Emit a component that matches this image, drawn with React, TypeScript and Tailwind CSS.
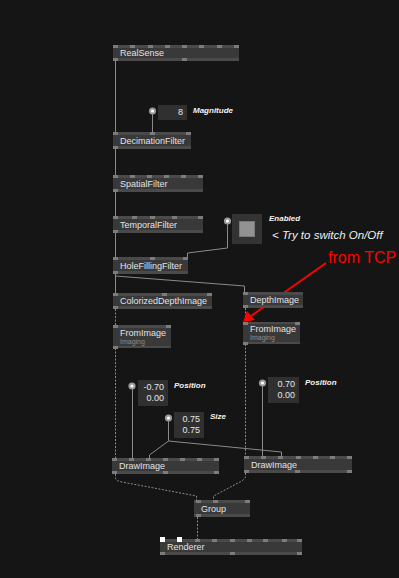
import React from 'react';

type NodeProps = {
  x: number;
  y: number;
  w: number;
  h?: number;
  label: string;
  sub?: string;
  top: number[];
  bottom: number[];
  white?: number[];
};

const font = { fontFamily: '"Liberation Sans", Arial, sans-serif' };

function Node({ x, y, w, h = 16, label, sub, top, bottom, white = [] }: NodeProps) {
  return (
    <div className="absolute flex flex-col bg-[#393939]" style={{ left: x, top: y, width: w, height: h }}>
      {/* top pin strip */}
      <div className="relative h-[3px] bg-[#4a4a4a]">
        {top.map((p) => (
          <div key={p} className="absolute top-0 h-[3px] w-[5px] bg-[#7c7c7c]" style={{ left: p }} />
        ))}
        {white.map((p) => (
          <div key={'w' + p} className="absolute top-[-2px] h-[5px] w-[5px] bg-white" style={{ left: p }} />
        ))}
      </div>
      <div className="flex flex-1 flex-col justify-center pl-[7px]">
        <span className="text-[9px] leading-[10px] text-[#e2e2e2]">{label}</span>
        {sub && <span className="text-[7px] leading-[8px] text-[#8c8c8c]">{sub}</span>}
      </div>
      {/* bottom pin strip */}
      <div className="relative h-[3px] bg-[#4a4a4a]">
        {bottom.map((p) => (
          <div key={p} className="absolute top-0 h-[3px] w-[5px] bg-[#7c7c7c]" style={{ left: p }} />
        ))}
      </div>
    </div>
  );
}

function IOBox({ x, y, w, values }: { x: number; y: number; w: number; values: string[] }) {
  return (
    <div
      className="absolute flex flex-col justify-center bg-[#303030] pr-[4px] py-[2px]"
      style={{ left: x, top: y, width: w }}
    >
      {values.map((v, i) => (
        <span key={i} className="text-right text-[9px] leading-[11px] text-[#e6e6e6]">
          {v}
        </span>
      ))}
    </div>
  );
}

function Caption({ x, y, text }: { x: number; y: number; text: string }) {
  return (
    <span
      className="absolute text-[8px] font-bold italic leading-none text-[#f2f2f2]"
      style={{ left: x, top: y - 4 }}
    >
      {text}
    </span>
  );
}

const evenly = (n: number, w: number) => Array.from({ length: n }, (_, i) => Math.round((i * (w - 5)) / (n - 1)));

export default function App() {
  return (
    <div className="relative h-[578px] w-[399px] overflow-hidden bg-[#151515]" style={font}>
      {/* links */}
      <svg className="absolute inset-0" width={399} height={578}>
        <g stroke="#8a8a8a" strokeWidth={1} fill="none">
          <path d="M115.5 61 V257" />
          <path d="M152.5 114 V132" />
          <path d="M227.5 224 V248 L187.5 253 V257" />
          <path d="M115.5 274 V293" />
          <path d="M115.5 276 L244.5 286 V292" />
          <path d="M132.5 389 V458" />
          <path d="M168.5 421 V441 L149.5 455 V458" />
          <path d="M168.5 441 L281.5 452 V456" />
          <path d="M262.5 386 V456" />
        </g>
        <g stroke="#8a8a8a" strokeWidth={1} fill="none" strokeDasharray="2 1.5">
          <path d="M115.5 309 V325" />
          <path d="M115.5 348 V458" />
          <path d="M245.5 308 V322" />
          <path d="M245.5 344 V456" />
          <path d="M115.5 474 V478 Q116 481 122 482 L196.5 496 V500" />
          <path d="M245.5 473 V477 Q244 480 240 482 L213.5 496 V500" />
          <path d="M197.5 517 V539" />
        </g>
        {/* pin circles */}
        {[
          [152.5, 111],
          [227.5, 221],
          [132, 386],
          [168.5, 418],
          [262.5, 383],
        ].map(([cx, cy]) => (
          <g key={cx}>
            <circle cx={cx} cy={cy} r={3.6} fill="#9a9a9a" />
            <circle cx={cx} cy={cy} r={1.6} fill="#ffffff" />
          </g>
        ))}
        {/* red annotation arrow */}
        <path d="M326 263 L251 316" stroke="#ff0000" strokeWidth={2} fill="none" />
        <path d="M243 322 L247 311 L255 320 Z" fill="#ff0000" />
      </svg>

      <Node x={113} y={45} w={126} label="RealSense" top={evenly(8, 126)} bottom={[0, 69]} />
      <Node x={113} y={132} w={78} h={17} label="DecimationFilter" top={[0, 37, 73]} bottom={[0]} />
      <Node x={113} y={175} w={90} h={17} label="SpatialFilter" top={evenly(6, 90)} bottom={[0]} />
      <Node x={113} y={216} w={90} h={17} label="TemporalFilter" top={[0, 19, 37, 59, 85]} bottom={[0]} />
      <Node x={113} y={257} w={75} h={17} label="HoleFillingFilter" top={[0, 37, 70]} bottom={[0]} />
      <Node x={113} y={293} w={99} label="ColorizedDepthImage" top={[0, 49, 94]} bottom={[0]} />
      <Node x={243} y={292} w={60} label="DepthImage" top={[0]} bottom={[0]} />
      <Node x={113} y={325} w={58} h={23} label="FromImage" sub="Imaging" top={[0, 53]} bottom={[0]} />
      <Node x={243} y={322} w={57} h={22} label="FromImage" sub="Imaging" top={[0, 52]} bottom={[0]} />
      <Node x={112} y={458} w={107} label="DrawImage" top={evenly(7, 107)} bottom={[0, 51, 102]} />
      <Node x={244} y={456} w={108} h={17} label="DrawImage" top={evenly(7, 108)} bottom={[0, 51, 103]} />
      <Node x={194} y={500} w={56} h={17} label="Group" top={[2, 19, 51]} bottom={[2]} />
      <Node
        x={160}
        y={539}
        w={142}
        label="Renderer"
        top={[35, 52, 70, 87, 103, 122, 137]}
        bottom={[0, 70, 137]}
        white={[0, 17]}
      />

      {/* value boxes */}
      <IOBox x={158} y={105} w={29} values={['8']} />
      <IOBox x={138} y={380} w={30} values={['-0.70', '0.00']} />
      <IOBox x={174} y={412} w={30} values={['0.75', '0.75']} />
      <IOBox x={268} y={377} w={31} values={['0.70', '0.00']} />

      {/* toggle */}
      <div className="absolute left-[232px] top-[214px] flex h-[30px] w-[30px] items-center justify-center bg-[#333333]">
        <div className="h-[16px] w-[16px] border border-[#7a7a7a] bg-[#929292]" />
      </div>

      <Caption x={193} y={111} text="Magnitude" />
      <Caption x={269} y={219} text="Enabled" />
      <Caption x={174} y={386} text="Position" />
      <Caption x={210} y={417} text="Size" />
      <Caption x={305} y={383} text="Position" />

      <span className="absolute left-[272px] top-[230px] text-[11.5px] italic leading-none text-[#f0f0f0]">
        &lt; Try to switch On/Off
      </span>
      <span className="absolute left-[328px] top-[250px] text-[16px] leading-none text-[#ff0000]">from TCP</span>
    </div>
  );
}
